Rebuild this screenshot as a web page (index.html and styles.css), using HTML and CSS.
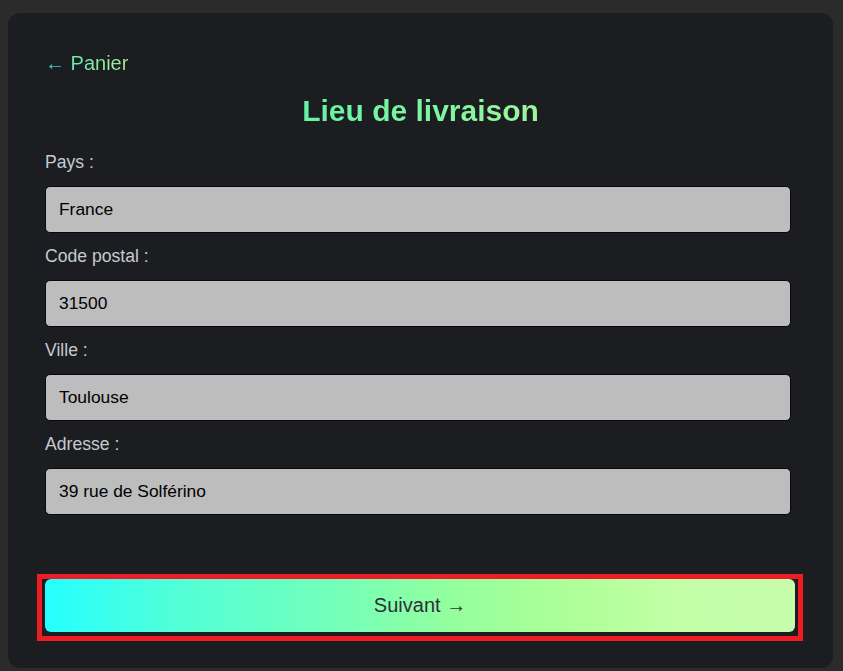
FILE: index.html
```html
<!DOCTYPE html>
<html lang="fr">
<head>
<meta charset="utf-8">
<title>Lieu de livraison</title>
<link rel="stylesheet" href="styles.css">
</head>
<body>
<main class="card">
  <a class="back" href="#">← Panier</a>
  <h1 class="title">Lieu de livraison</h1>
  <form class="form">
    <div class="group">
      <label class="label" for="pays">Pays :</label>
      <input class="field" id="pays" type="text" value="France">
    </div>
    <div class="group">
      <label class="label" for="cp">Code postal :</label>
      <input class="field" id="cp" type="text" value="31500">
    </div>
    <div class="group">
      <label class="label" for="ville">Ville :</label>
      <input class="field" id="ville" type="text" value="Toulouse">
    </div>
    <div class="group">
      <label class="label" for="adr">Adresse :</label>
      <input class="field" id="adr" type="text" value="39 rue de Solférino">
    </div>
    <div class="btn-wrap">
      <button class="btn" type="button">Suivant →</button>
    </div>
  </form>
</main>
</body>
</html>
```
FILE: styles.css
```css
html, body {
  margin: 0;
  padding: 0;
  background: #2b2b2b;
  height: 100%;
}
body {
  padding: 13px 10px 0 8px;
  box-sizing: border-box;
  font-family: "Liberation Sans", Arial, sans-serif;
  overflow: hidden;
}
.card {
  width: 825px;
  height: 655px;
  box-sizing: border-box;
  background: #1c1d21;
  border-radius: 12px;
  padding: 39px 37px 0 37px;
}
.back {
  display: inline-block;
  font-size: 20px;
  line-height: 23px;
  text-decoration: none;
  background: linear-gradient(90deg, #1fd6e0 0%, #62eab0 30%, #8ef0a0 70%, #a9e6a2 100%);
  -webkit-background-clip: text;
  background-clip: text;
  color: transparent;
}
.title {
  display: block;
  margin: 18px auto 0 auto;
  width: 240px;
  white-space: nowrap;
  text-align: center;
  font-size: 30px;
  line-height: 35px;
  font-weight: bold;
  background: linear-gradient(90deg, #65f3a4 0%, #7ff6a0 60%, #a0f59a 100%);
  -webkit-background-clip: text;
  background-clip: text;
  color: transparent;
}
.form {
  margin-top: 25px;
}
.group {
  display: flex;
  flex-direction: column;
  align-items: flex-start;
  margin-bottom: 14px;
}
.label {
  font-size: 17.6px;
  line-height: 18px;
  color: #c6cad0;
  margin-bottom: 15px;
}
.field {
  width: 746px;
  height: 47px;
  box-sizing: border-box;
  background: #bdbdbd;
  border: 1px solid #08080a;
  border-radius: 5px;
  padding: 0 13px;
  font-family: "Liberation Sans", Arial, sans-serif;
  font-size: 17.4px;
  color: #000;
  outline: none;
}
.btn-wrap {
  margin: 59px 0 0 -8px;
  width: 766px;
  box-sizing: border-box;
  border: 5px solid #ee1c25;
  padding: 0 3px 4px 3px;
}
.btn {
  display: block;
  width: 750px;
  height: 53px;
  border: none;
  border-radius: 6px;
  background: linear-gradient(90deg, #26ffff 0%, #52ffd6 18%, #72ffbb 38%, #95ff9c 55%, #adff98 70%, #c4ffa8 85%, #c6fdab 100%);
  font-family: "Liberation Sans", Arial, sans-serif;
  font-size: 20px;
  color: #2f2f35;
  cursor: pointer;
  padding: 0;
}
```
